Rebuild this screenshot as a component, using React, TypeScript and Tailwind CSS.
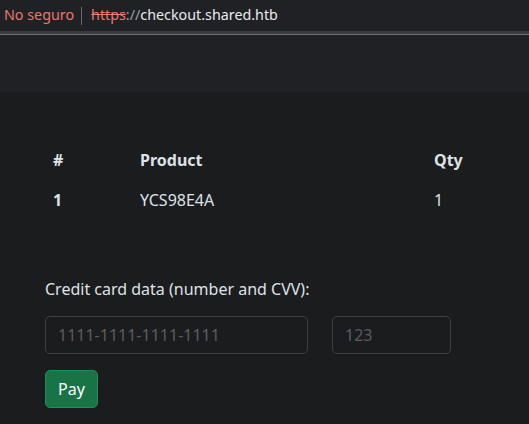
import React from 'react';

const font = { fontFamily: '"Noto Sans", "Open Sans", sans-serif' };

const App: React.FC = () => {
  return (
    <div className="w-[529px] h-[424px] overflow-hidden bg-[#1b1c1e] text-[#dee2e6]" style={font}>
      {/* address bar */}
      <div className="h-[31px] bg-[#202124] flex items-center pl-[4px] text-[14.3px] leading-none">
        <span className="text-[#e8776c]">No seguro</span>
        <span className="ml-[7px] mr-[9px] h-[18px] w-px bg-[#6b6b6b]" />
        <span className="text-[#e8776c] line-through decoration-[#e8776c]">https</span>
        <span className="text-[#9aa0a6]">://</span>
        <span className="text-[#e8eaed]">checkout.shared.htb</span>
      </div>
      <div className="h-[3px] bg-[#3a3b3d]" />
      <div className="h-px bg-[#6e6f71]" />
      {/* navbar band */}
      <div className="h-[57px] bg-[#202124]" />

      <div className="px-[45px] pt-[46px]">
        <table className="w-[439px] text-[16px] text-left">
          <thead>
            <tr className="h-[44px]">
              <th className="w-[87px] px-[8px] font-bold">#</th>
              <th className="px-[8px] font-bold">Product</th>
              <th className="w-[58px] px-[8px] font-bold">Qty</th>
            </tr>
          </thead>
          <tbody>
            <tr className="h-[36px]">
              <td className="px-[8px] font-bold">1</td>
              <td className="px-[8px]">YCS98E4A</td>
              <td className="px-[8px]">1</td>
            </tr>
          </tbody>
        </table>

        <div className="mt-[59px] text-[16px]">Credit card data (number and CVV):</div>
        <div className="mt-[15px] flex gap-[24px]">
          <input
            className="w-[263px] h-[38px] rounded-[5px] border border-[#3d3f42] bg-transparent px-[12px] text-[16px] outline-none placeholder:text-[#5b5d60]"
            placeholder="1111-1111-1111-1111"
            style={font}
          />
          <input
            className="w-[119px] h-[38px] rounded-[5px] border border-[#3d3f42] bg-transparent px-[12px] text-[16px] outline-none placeholder:text-[#5b5d60]"
            placeholder="123"
            style={font}
          />
        </div>
        <button
          className="mt-[16px] h-[38px] w-[53px] rounded-[5px] border border-[#1c9055] bg-[#187446] text-[16px] text-white"
          style={font}
        >
          Pay
        </button>
      </div>
    </div>
  );
};

export default App;
